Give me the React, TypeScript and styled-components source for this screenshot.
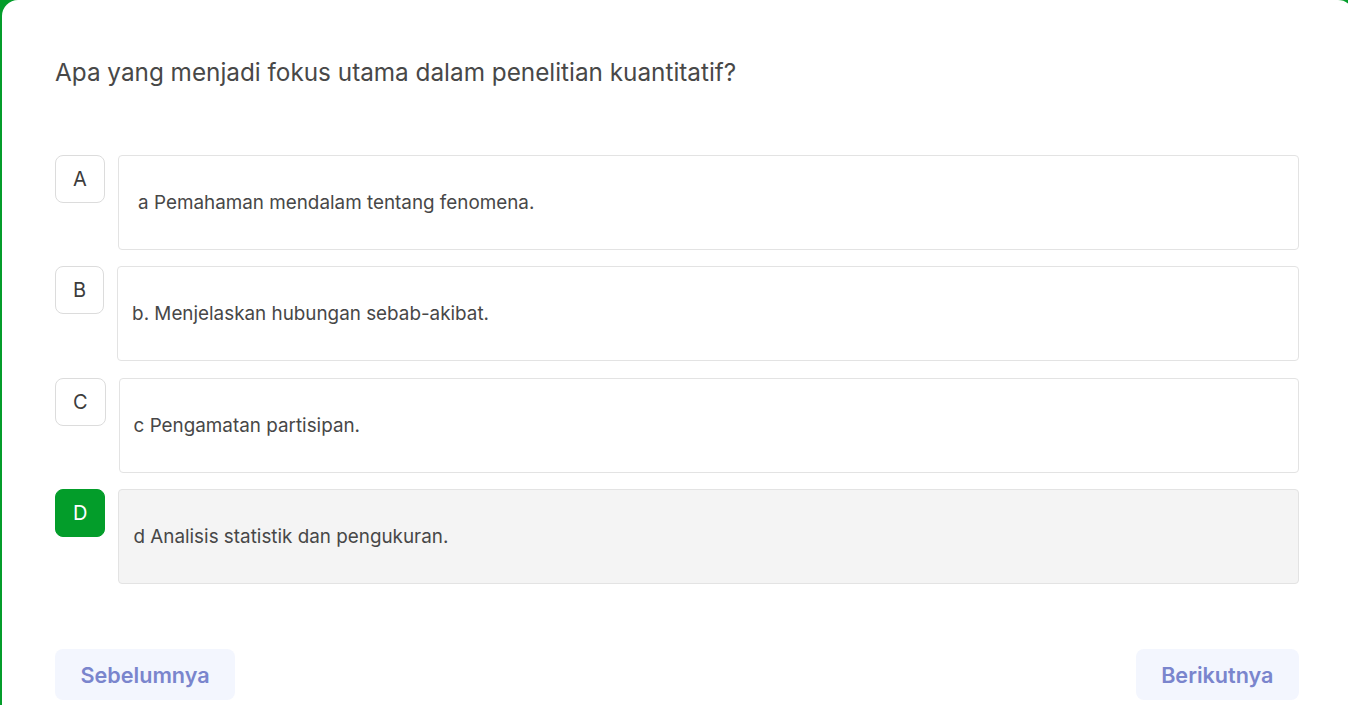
import React from "react";
import styled, { createGlobalStyle } from "styled-components";

const Global = createGlobalStyle`
  html, body { margin: 0; padding: 0; }
  body {
    font-family: Inter, "Noto Sans", "Liberation Sans", sans-serif;
    overflow: hidden;
    background: #ffffff;
  }
`;

const Page = styled.div`
  min-height: 100vh;
  background: #049d2b;
  padding-left: 2px;
  overflow: hidden;
`;

const Card = styled.div`
  background: #ffffff;
  border-radius: 16px 16px 0 0;
  margin-right: -6px;
  min-height: 760px;
  padding: 55px 55px 40px 53px;
  box-sizing: border-box;
`;

const Question = styled.h1`
  margin: 0;
  font-size: 24.3px;
  line-height: 34px;
  font-weight: 400;
  color: #484848;
`;

const Options = styled.div`
  margin-top: 66px;
  display: flex;
  flex-direction: column;
  gap: 16.4px;
`;

const Row = styled.div`
  display: flex;
  align-items: flex-start;
  gap: 13px;
`;

const Letter = styled.div<{ $active?: boolean }>`
  flex: none;
  height: 48px;
  padding: 0 17px;
  box-sizing: border-box;
  display: flex;
  align-items: center;
  justify-content: center;
  border-radius: 8px;
  border: 1px solid ${(p) => (p.$active ? "#039d2a" : "#dcdcdc")};
  background: ${(p) => (p.$active ? "#039d2a" : "#ffffff")};
  color: ${(p) => (p.$active ? "#ffffff" : "#3c3c3c")};
  font-size: 20px;
`;

const Answer = styled.div<{ $active?: boolean }>`
  flex: 1;
  min-height: 95px;
  box-sizing: border-box;
  display: flex;
  align-items: center;
  padding: 0 14px;
  border: 1px solid #e3e3e3;
  border-radius: 4px;
  background: ${(p) => (p.$active ? "#f4f4f4" : "#ffffff")};
  color: #474747;
  font-size: 18.85px;
  white-space: pre;
`;

const Nav = styled.div`
  margin-top: 65px;
  display: flex;
  justify-content: space-between;
`;

const NavButton = styled.button`
  height: 51px;
  padding: 0 25.5px;
  border: none;
  border-radius: 8px;
  background: #f3f6fe;
  color: #7a85cd;
  font-family: Inter, "Noto Sans", "Liberation Sans", sans-serif;
  font-size: 21.6px;
  font-weight: 600;
  cursor: pointer;
`;

const options = [
  { key: "A", text: " a Pemahaman mendalam tentang fenomena." },
  { key: "B", text: "b. Menjelaskan hubungan sebab-akibat." },
  { key: "C", text: "c Pengamatan partisipan." },
  { key: "D", text: "d Analisis statistik dan pengukuran.", active: true },
];

export default function App() {
  return (
    <>
      <Global />
      <Page>
        <Card>
          <Question>Apa yang menjadi fokus utama dalam penelitian kuantitatif?</Question>
          <Options>
            {options.map((o) => (
              <Row key={o.key}>
                <Letter $active={o.active}>{o.key}</Letter>
                <Answer $active={o.active}>{o.text}</Answer>
              </Row>
            ))}
          </Options>
          <Nav>
            <NavButton>Sebelumnya</NavButton>
            <NavButton>Berikutnya</NavButton>
          </Nav>
        </Card>
      </Page>
    </>
  );
}
